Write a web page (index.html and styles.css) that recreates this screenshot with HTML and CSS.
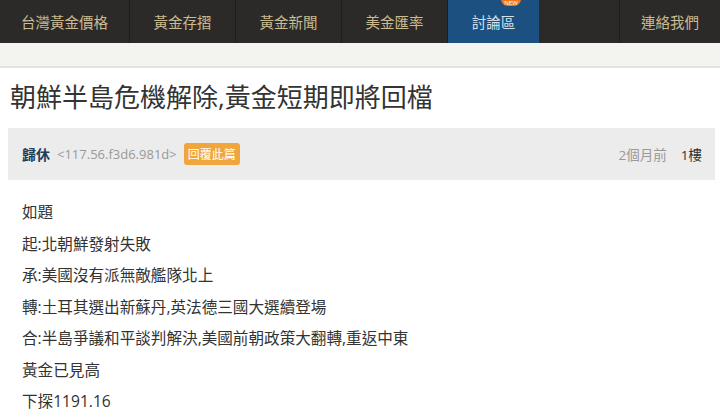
FILE: index.html
```html
<!DOCTYPE html>
<html lang="zh-Hant">
<head>
    <meta charset="UTF-8">
    <meta name="viewport" content="width=device-width, initial-scale=1.0">
    <link rel="stylesheet" href="styles.css">
    <title>討論區</title>
</head>
<body>

    <!-- 上方選單 -->
    <div class="nav">
        <a class="nav-item" href="#">台灣黃金價格</a>
        <a class="nav-item" href="#">黃金存摺</a>
        <a class="nav-item" href="#">黃金新聞</a>
        <a class="nav-item" href="#">美金匯率</a>
        <a class="nav-item active" href="#">討論區<span class="new-badge">NEW</span></a>
        <div class="nav-space"></div>
        <a class="nav-item nav-last" href="#">連絡我們</a>
    </div>
    <div class="sub-band"></div>

    <div class="content">
        <h1 class="title">朝鮮半島危機解除,黃金短期即將回檔</h1>

        <!-- 文章標頭 -->
        <div class="post-head">
            <span class="author">歸休</span>
            <span class="ip">&lt;117.56.f3d6.981d&gt;</span>
            <a class="reply-btn" href="#">回覆此篇</a>
            <span class="spacer"></span>
            <span class="time">2個月前</span>
            <span class="floor">1樓</span>
        </div>

        <div class="post-body">
            <p>如題</p>
            <p>起:北朝鮮發射失敗</p>
            <p>承:美國沒有派無敵艦隊北上</p>
            <p>轉:土耳其選出新蘇丹,英法德三國大選續登場</p>
            <p>合:半島爭議和平談判解決,美國前朝政策大翻轉,重返中東</p>
            <p>黃金已見高</p>
            <p>下探1191.16</p>
        </div>
    </div>

</body>
</html>
```

FILE: styles.css
```css
body {
    margin: 0;
    background: #fff;
    font-family: "Open Sans", "Noto Sans CJK TC", sans-serif;
    color: #333;
}

/* 選單 */
.nav {
    display: flex;
    height: 43px;
    background: #2b2a28;
}

.nav-item {
    position: relative;
    display: flex;
    align-items: center;
    justify-content: center;
    min-width: 106px;
    padding: 0 21px;
    color: #cbbb92;
    font-size: 14.5px;
    text-decoration: none;
    border-right: 1px solid #1e1d1c;
    box-sizing: border-box;
}

.nav-item.active {
    min-width: 91px;
    background: #1b5080;
    color: #d3e0ec;
    border-right: none;
}

.nav-space {
    flex: 1;
    border-right: 1px solid #1e1d1c;
}

.nav-last {
    min-width: 92px;
    border-right: none;
}

.new-badge {
    position: absolute;
    top: -8px;
    left: 53px;
    width: 20px;
    height: 14px;
    border-radius: 7px;
    background: #f07a1a;
    color: #fff;
    font-size: 6px;
    line-height: 22px;
    text-align: center;
}

.sub-band {
    height: 23px;
    background: #f3f3ef;
    border-bottom: 2px solid #e2e2de;
}

.content {
    padding: 0 5px 0 8px;
}

.title {
    margin: 11px 0 0 2px;
    font-size: 26px;
    font-weight: normal;
    color: #333;
    line-height: 36px;
}

/* 文章標頭 */
.post-head {
    display: flex;
    align-items: center;
    height: 52px;
    margin-top: 13px;
    padding: 0 13px 0 14px;
    background: #ececec;
}

.author {
    font-size: 14px;
    font-weight: bold;
    color: #1d3f5e;
}

.ip {
    margin-left: 7px;
    font-size: 13px;
    color: #999;
}

.reply-btn {
    margin-left: 7px;
    padding: 2px 4px;
    border-radius: 3px;
    background: #f0a63c;
    color: #fff;
    font-size: 12px;
    text-decoration: none;
}

.spacer {
    flex: 1;
}

.time {
    font-size: 13.5px;
    color: #999;
}

.floor {
    margin-left: 14px;
    font-size: 13.5px;
    color: #333;
}

.post-body {
    padding: 17px 14px 0;
    font-size: 15.6px;
}

.post-body p {
    margin: 0;
    line-height: 31.5px;
}
```
